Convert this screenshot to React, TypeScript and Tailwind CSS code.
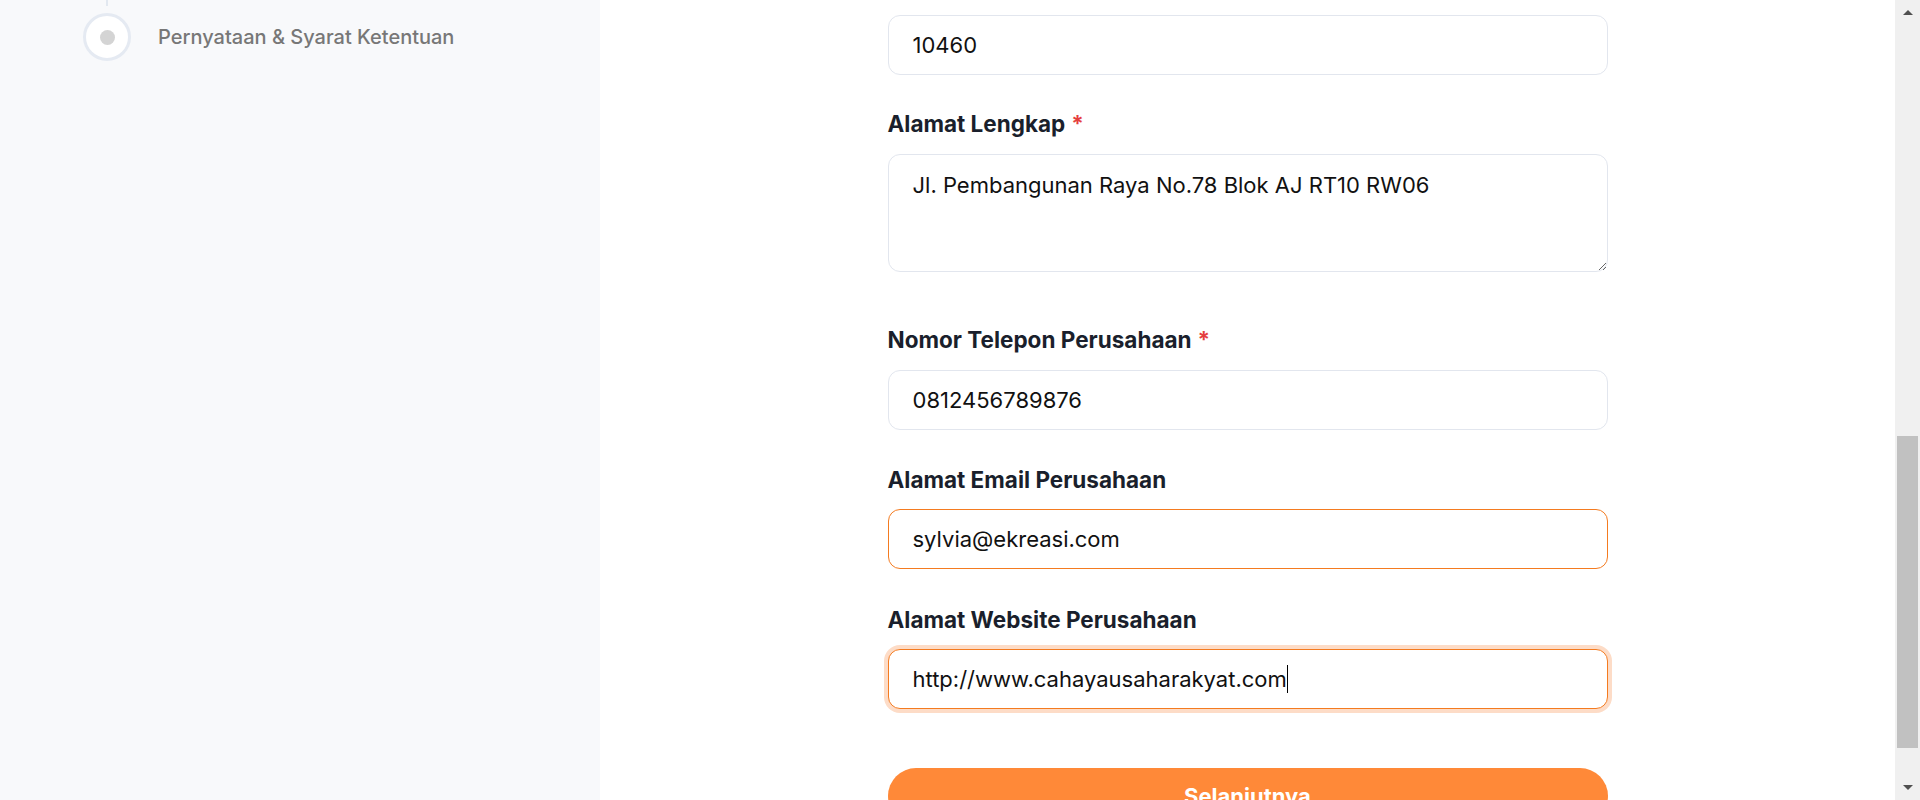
import React from "react";

const font = { fontFamily: "Inter, 'Noto Sans', sans-serif" };

function Label({ text, required }: { text: string; required?: boolean }) {
  return (
    <div className="text-[22.5px] leading-[24px] font-bold text-[#1a1f2c]">
      {text}
      {required && <span className="text-[#e53e3e] ml-[6px]">*</span>}
    </div>
  );
}

function Field({
  value,
  focused,
  ring,
  caret,
}: {
  value: string;
  focused?: boolean;
  ring?: boolean;
  caret?: boolean;
}) {
  return (
    <div
      className={
        "h-[60px] w-full rounded-[12px] border bg-white px-6 flex items-center text-[22px] text-[#111111] " +
        (focused ? "border-[#f47b20] " : "border-[#e2e6ee] ") +
        (ring ? "ring-4 ring-[#fddcc7]" : "")
      }
    >
      <span>{value}</span>
      {caret && <span className="inline-block w-px h-[28px] bg-black" />}
    </div>
  );
}

export default function App() {
  return (
    <div className="flex h-[800px] w-[1920px] overflow-hidden bg-white" style={font}>
      <aside className="w-[600px] shrink-0 bg-[#f8f9fb]">
        <div className="pl-[83px]">
          <div className="w-[48px] flex justify-center">
            <div className="w-[2px] h-[6px] bg-[#e2e8f0]" />
          </div>
          <div className="mt-[7px] flex items-center gap-[27px]">
            <div className="w-[48px] h-[48px] rounded-full border-[3px] border-[#e5eaf2] bg-white flex items-center justify-center">
              <div className="w-[15px] h-[15px] rounded-full bg-[#d4d4d4]" />
            </div>
            <span className="text-[20px] font-medium text-[#777777]">
              Pernyataan &amp; Syarat Ketentuan
            </span>
          </div>
        </div>
      </aside>

      <main className="flex-1 flex justify-center">
        <div className="w-[720px] pt-[15px]">
          <Field value="10460" />

          <div className="mt-[37px]">
            <Label text="Alamat Lengkap" required />
          </div>
          <textarea
            readOnly
            defaultValue="Jl. Pembangunan Raya No.78 Blok AJ RT10 RW06"
            className="mt-[18px] block h-[118px] w-full rounded-[12px] border border-[#e2e6ee] bg-white px-6 pt-[16px] text-[22px] leading-[28px] text-[#111111] outline-none"
            style={font}
          />

          <div className="mt-[56px]">
            <Label text="Nomor Telepon Perusahaan" required />
          </div>
          <div className="mt-[18px]">
            <Field value="0812456789876" />
          </div>

          <div className="mt-[38px]">
            <Label text="Alamat Email Perusahaan" />
          </div>
          <div className="mt-[17px]">
            <Field value="sylvia@ekreasi.com" focused />
          </div>

          <div className="mt-[39px]">
            <Label text="Alamat Website Perusahaan" />
          </div>
          <div className="mt-[17px]">
            <Field value="http://www.cahayausaharakyat.com" focused ring caret />
          </div>

          <button className="mt-[59px] h-[56px] w-full rounded-full bg-[#ff8938] text-white text-[22px] font-bold">
            Selanjutnya
          </button>
        </div>
      </main>

      <div className="w-[25px] shrink-0 bg-[#f0f0f0] flex flex-col items-center">
        <div className="h-[25px] flex items-center justify-center">
          <div className="w-0 h-0 border-l-[5px] border-r-[5px] border-b-[5px] border-l-transparent border-r-transparent border-b-[#505050]" />
        </div>
        <div className="flex-1 w-full flex flex-col px-[2px]">
          <div className="h-[411px]" />
          <div className="h-[312px] w-full bg-[#c1c1c1]" />
        </div>
        <div className="h-[25px] flex items-center justify-center">
          <div className="w-0 h-0 border-l-[5px] border-r-[5px] border-t-[5px] border-l-transparent border-r-transparent border-t-[#505050]" />
        </div>
      </div>
    </div>
  );
}
